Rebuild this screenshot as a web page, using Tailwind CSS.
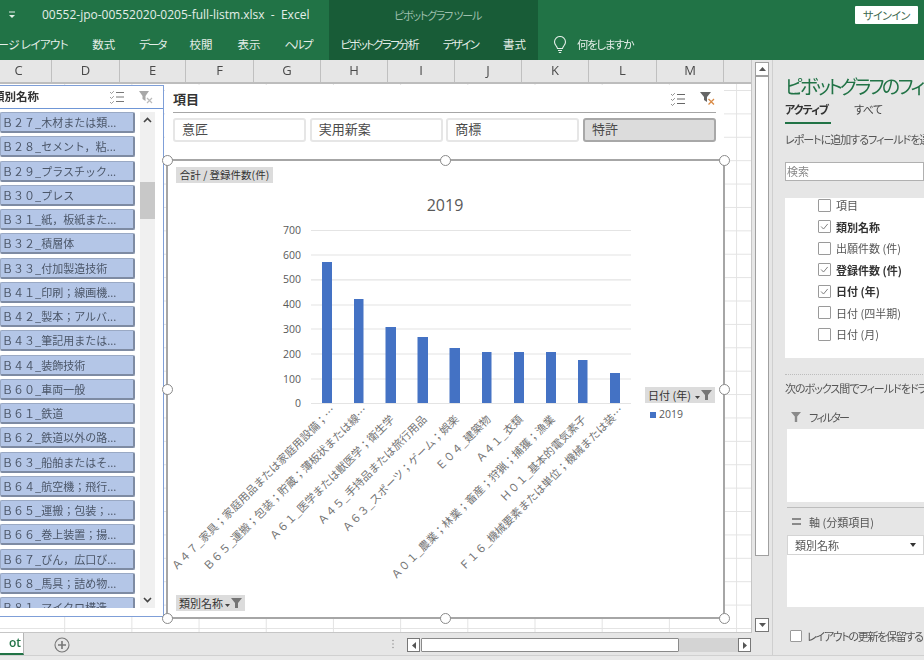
<!DOCTYPE html>
<html lang="ja">
<head>
<meta charset="utf-8">
<script src="https://cdn.jsdelivr.net/npm/@tailwindcss/browser@4"></script>
</head>
<body class="m-0 overflow-hidden bg-[#e6e6e6]">
<div class="w-[924px] h-[660px] flex flex-col overflow-hidden blur-[0.5px] text-[#444] [font-family:'Noto_Sans_CJK_JP',sans-serif] [font-feature-settings:'palt']">

  <!-- title bar -->
  <header class="h-[30px] flex items-center bg-[#217346] text-[#e4eee8] shrink-0">
    <div class="w-[42px] flex justify-center pr-[18px]">
      <svg width="8" height="8" viewBox="0 0 8 8"><path d="M1 1h6" stroke="#e4eee8"/><path d="M1 4h6L4 7z" fill="#e4eee8"/></svg>
    </div>
    <div class="w-[287px] text-[12px] whitespace-pre [font-family:'Open_Sans',sans-serif]">00552-jpo-00552020-0205-full-listm.xlsx  -  Excel</div>
    <div class="w-[209px] h-full bg-[#185c37] flex items-center justify-center pl-[8px] text-[11px] tracking-[-1.2px] text-[#9dbfac]">ピボットグラフ ツール</div>
    <div class="flex-1 flex justify-end pr-[6px]">
      <div class="w-[63px] h-[18px] bg-white rounded-[1px] flex items-center justify-center text-[11px] tracking-[-0.5px] text-[#3f6b52]">サインイン</div>
    </div>
  </header>

  <!-- ribbon tabs -->
  <nav class="h-[30px] flex items-center bg-[#217346] text-[#e4eee8] text-[11.5px] shrink-0 whitespace-nowrap">
    <div class="w-[80px] h-full overflow-hidden flex items-center justify-end pr-[12px]"><span class="shrink-0 tracking-[-0.6px]">ページ レイアウト</span></div>
    <div class="w-[47.5px] text-center">数式</div>
    <div class="w-[49.5px] text-center tracking-[-2px]">データ</div>
    <div class="w-[48px] text-center">校閲</div>
    <div class="w-[48px] text-center">表示</div>
    <div class="w-[56px] text-center pr-[6px] tracking-[-2px]">ヘルプ</div>
    <div class="w-[209px] h-full bg-[#185c37] flex items-center">
      <div class="w-[100px] text-center tracking-[-1.700px]">ピボットグラフ分析</div>
      <div class="w-[63px] text-center tracking-[-1.700px]">デザイン</div>
      <div class="w-[45px] text-center">書式</div>
    </div>
    <div class="flex items-center pl-[15px] gap-[10px]">
      <svg width="14" height="18" viewBox="0 0 14 18" fill="none" stroke="#e4eee8" stroke-width="1.1"><path d="M4.5 12.5C4 10 1.5 9 1.5 6a5.5 5.5 0 0 1 11 0c0 3-2.500 4-3 6.500z"/><path d="M5 14.500h4M5.800 16.500h2.400"/></svg>
      <span class="tracking-[-1.300px]">何をしますか</span>
    </div>
  </nav>

  <!-- main -->
  <main class="flex-1 flex min-h-0">
    <div class="w-[772px] flex flex-col">
      <div class="flex-1 flex min-h-0">
        <div class="w-[752px] flex flex-col border-r border-[#c6c6c6]">
          <!-- column headers -->
          <div class="h-[24px] flex shrink-0 -ml-[14px] border-b-2 border-[#bdbdbd] text-[13px] leading-[20px] text-[#4a4a4a] [font-family:'Open_Sans',sans-serif] bg-[#e6e6e6]">
            <div class="w-[66px] border-r border-[#c0c0c0] text-center">C</div>
            <div class="w-[68px] border-r border-[#c0c0c0] text-center">D</div>
            <div class="w-[66px] border-r border-[#c0c0c0] text-center">E</div>
            <div class="w-[68px] border-r border-[#c0c0c0] text-center">F</div>
            <div class="w-[67px] border-r border-[#c0c0c0] text-center">G</div>
            <div class="w-[67px] border-r border-[#c0c0c0] text-center">H</div>
            <div class="w-[67px] border-r border-[#c0c0c0] text-center">I</div>
            <div class="w-[67px] border-r border-[#c0c0c0] text-center">J</div>
            <div class="w-[67px] border-r border-[#c0c0c0] text-center">K</div>
            <div class="w-[68px] border-r border-[#c0c0c0] text-center">L</div>
            <div class="w-[67px] border-r border-[#c0c0c0] text-center">M</div>
          </div>

          <!-- sheet -->
          <div class="relative flex-1 overflow-hidden bg-white bg-[linear-gradient(#e3e3e3_1px,transparent_1px),linear-gradient(90deg,#e3e3e3_1px,transparent_1px)] bg-[length:67.2px_23.4px] bg-[position:-3px_6px] border-b border-[#c6c6c6]">

            <!-- left slicer -->
            <section class="absolute left-[-10px] top-[1px] w-[174px] h-[532px] bg-white border border-[#7f9fd8] flex flex-col">
              <div class="h-[23px] flex items-center pl-[2px] border-b border-[#6f96d6] shrink-0">
                <span class="w-[116px] text-[11.5px] font-bold text-[#333] overflow-hidden whitespace-nowrap">類別名称</span>
                <svg width="16" height="14" viewBox="0 0 16 14" fill="none" stroke="#777"><path d="M1 2l1.500 1.500L5 1M1 7l1.500 1.500L5 6M1 12l1.500 1.500L5 11" stroke-dasharray="1 .6"/><path d="M7 2.500h8M7 7h8M7 11.500h8"/></svg>
                <svg class="ml-[13px]" width="16" height="15" viewBox="0 0 16 15"><path d="M1 1h10L7.500 6v5L4.500 9V6z" fill="#a8a8a8"/><path d="M9 8l5 5M14 8l-5 5" stroke="#bbb" stroke-width="1.200"/></svg>
              </div>
              <div class="flex-1 flex pt-[3px] pl-[9px] min-h-0 overflow-hidden">
                <ul class="w-[135px] flex flex-col gap-[3.250px] text-[11px] leading-[18px] text-[#4b5668] whitespace-nowrap overflow-hidden h-[496px] [font-feature-settings:normal]">
                  <li class="h-[21px] shrink-0 bg-[#b4c6e7] border border-[#9aa9c4] border-r-2 border-b-2 border-r-[#7e8ba3] border-b-[#7e8ba3] rounded-[2px] pl-[1px]">Ｂ２７_木材または類...</li>
                  <li class="h-[21px] shrink-0 bg-[#b4c6e7] border border-[#9aa9c4] border-r-2 border-b-2 border-r-[#7e8ba3] border-b-[#7e8ba3] rounded-[2px] pl-[1px]">Ｂ２８_セメント，粘...</li>
                  <li class="h-[21px] shrink-0 bg-[#b4c6e7] border border-[#9aa9c4] border-r-2 border-b-2 border-r-[#7e8ba3] border-b-[#7e8ba3] rounded-[2px] pl-[1px]">Ｂ２９_プラスチック...</li>
                  <li class="h-[21px] shrink-0 bg-[#b4c6e7] border border-[#9aa9c4] border-r-2 border-b-2 border-r-[#7e8ba3] border-b-[#7e8ba3] rounded-[2px] pl-[1px]">Ｂ３０_プレス</li>
                  <li class="h-[21px] shrink-0 bg-[#b4c6e7] border border-[#9aa9c4] border-r-2 border-b-2 border-r-[#7e8ba3] border-b-[#7e8ba3] rounded-[2px] pl-[1px]">Ｂ３１_紙，板紙また...</li>
                  <li class="h-[21px] shrink-0 bg-[#b4c6e7] border border-[#9aa9c4] border-r-2 border-b-2 border-r-[#7e8ba3] border-b-[#7e8ba3] rounded-[2px] pl-[1px]">Ｂ３２_積層体</li>
                  <li class="h-[21px] shrink-0 bg-[#b4c6e7] border border-[#9aa9c4] border-r-2 border-b-2 border-r-[#7e8ba3] border-b-[#7e8ba3] rounded-[2px] pl-[1px]">Ｂ３３_付加製造技術</li>
                  <li class="h-[21px] shrink-0 bg-[#b4c6e7] border border-[#9aa9c4] border-r-2 border-b-2 border-r-[#7e8ba3] border-b-[#7e8ba3] rounded-[2px] pl-[1px]">Ｂ４１_印刷；線画機...</li>
                  <li class="h-[21px] shrink-0 bg-[#b4c6e7] border border-[#9aa9c4] border-r-2 border-b-2 border-r-[#7e8ba3] border-b-[#7e8ba3] rounded-[2px] pl-[1px]">Ｂ４２_製本；アルバ...</li>
                  <li class="h-[21px] shrink-0 bg-[#b4c6e7] border border-[#9aa9c4] border-r-2 border-b-2 border-r-[#7e8ba3] border-b-[#7e8ba3] rounded-[2px] pl-[1px]">Ｂ４３_筆記用または...</li>
                  <li class="h-[21px] shrink-0 bg-[#b4c6e7] border border-[#9aa9c4] border-r-2 border-b-2 border-r-[#7e8ba3] border-b-[#7e8ba3] rounded-[2px] pl-[1px]">Ｂ４４_装飾技術</li>
                  <li class="h-[21px] shrink-0 bg-[#b4c6e7] border border-[#9aa9c4] border-r-2 border-b-2 border-r-[#7e8ba3] border-b-[#7e8ba3] rounded-[2px] pl-[1px]">Ｂ６０_車両一般</li>
                  <li class="h-[21px] shrink-0 bg-[#b4c6e7] border border-[#9aa9c4] border-r-2 border-b-2 border-r-[#7e8ba3] border-b-[#7e8ba3] rounded-[2px] pl-[1px]">Ｂ６１_鉄道</li>
                  <li class="h-[21px] shrink-0 bg-[#b4c6e7] border border-[#9aa9c4] border-r-2 border-b-2 border-r-[#7e8ba3] border-b-[#7e8ba3] rounded-[2px] pl-[1px]">Ｂ６２_鉄道以外の路...</li>
                  <li class="h-[21px] shrink-0 bg-[#b4c6e7] border border-[#9aa9c4] border-r-2 border-b-2 border-r-[#7e8ba3] border-b-[#7e8ba3] rounded-[2px] pl-[1px]">Ｂ６３_船舶またはそ...</li>
                  <li class="h-[21px] shrink-0 bg-[#b4c6e7] border border-[#9aa9c4] border-r-2 border-b-2 border-r-[#7e8ba3] border-b-[#7e8ba3] rounded-[2px] pl-[1px]">Ｂ６４_航空機；飛行...</li>
                  <li class="h-[21px] shrink-0 bg-[#b4c6e7] border border-[#9aa9c4] border-r-2 border-b-2 border-r-[#7e8ba3] border-b-[#7e8ba3] rounded-[2px] pl-[1px]">Ｂ６５_運搬；包装；...</li>
                  <li class="h-[21px] shrink-0 bg-[#b4c6e7] border border-[#9aa9c4] border-r-2 border-b-2 border-r-[#7e8ba3] border-b-[#7e8ba3] rounded-[2px] pl-[1px]">Ｂ６６_巻上装置；揚...</li>
                  <li class="h-[21px] shrink-0 bg-[#b4c6e7] border border-[#9aa9c4] border-r-2 border-b-2 border-r-[#7e8ba3] border-b-[#7e8ba3] rounded-[2px] pl-[1px]">Ｂ６７_びん，広口び...</li>
                  <li class="h-[21px] shrink-0 bg-[#b4c6e7] border border-[#9aa9c4] border-r-2 border-b-2 border-r-[#7e8ba3] border-b-[#7e8ba3] rounded-[2px] pl-[1px]">Ｂ６８_馬具；詰め物...</li>
                  <li class="h-[21px] shrink-0 bg-[#b4c6e7] border border-[#9aa9c4] border-r-2 border-b-2 border-r-[#7e8ba3] border-b-[#7e8ba3] rounded-[2px] pl-[1px]">Ｂ８１_マイクロ構造...</li>
                </ul>
                <div class="ml-[5px] w-[15px] h-[496px] bg-[#f0f0f0] flex flex-col justify-between items-center relative">
                  <svg class="mt-[5px]" width="9" height="6" viewBox="0 0 9 6" fill="none" stroke="#444" stroke-width="1.600"><path d="M1 5l3.500-3.500L8 5"/></svg>
                  <div class="absolute left-0 top-[70px] w-[15px] h-[37px] bg-[#c8c8c8]"></div>
                  <svg class="mb-[5px]" width="9" height="6" viewBox="0 0 9 6" fill="none" stroke="#444" stroke-width="1.600"><path d="M1 1l3.500 3.500L8 1"/></svg>
                </div>
              </div>
            </section>

            <!-- top slicer -->
            <section class="absolute left-[165px] top-[1px] w-[559px] h-[75px] bg-white px-[8px]">
              <div class="h-[28px] flex items-center border-b border-[#a6a6a6]">
                <span class="flex-1 text-[13px] font-bold text-[#333]">項目</span>
                <svg width="16" height="14" viewBox="0 0 16 14" fill="none" stroke="#666"><path d="M1 2l1.500 1.500L5 1M1 7l1.500 1.500L5 6M1 12l1.500 1.500L5 11" stroke-dasharray="1 .6"/><path d="M7 2.500h8M7 7h8M7 11.500h8"/></svg>
                <svg class="ml-[13px]" width="17" height="15" viewBox="0 0 17 15"><path d="M1 1h11L8 6v5L5 9V6z" fill="#666"/><path d="M9.500 8l5.500 5.500M15 8l-5.500 5.500" stroke="#d98a45" stroke-width="1.300"/></svg>
              </div>
              <div class="grid grid-cols-4 gap-[3.500px] mt-[5px] text-[13px] leading-[17px] text-[#4a4a4a]">
                <div class="h-[24px] bg-white border-2 border-[#e6e6e6] rounded-[3px] pl-[7px]">意匠</div>
                <div class="h-[24px] bg-white border-2 border-[#e6e6e6] rounded-[3px] pl-[7px]">実用新案</div>
                <div class="h-[24px] bg-white border-2 border-[#e6e6e6] rounded-[3px] pl-[7px]">商標</div>
                <div class="h-[24px] bg-[#dcdcdc] border-2 border-[#a8a8a8] rounded-[3px] pl-[7px]">特許</div>
              </div>
            </section>

            <!-- chart -->
            <section class="absolute left-[166px] top-[75px] w-[559px] h-[460px] bg-white border-2 border-[#a6a6a6] text-[10.5px] text-[#333]">
              <svg class="block [font-feature-settings:normal]" width="555" height="456" viewBox="168 161 555 456" font-family="'Noto Sans CJK JP',sans-serif">
                <text x="445" y="211" text-anchor="middle" font-size="16" fill="#595959" font-family="'Open Sans',sans-serif">2019</text>
                <g stroke="#e4e4e4" stroke-width="1.200">
                  <path d="M311 230.500H631M311 255H631M311 279.800H631M311 305H631M311 329H631M311 354H631M311 379H631M311 403.500H631"/>
                </g>
                <g font-size="10.500" fill="#595959" text-anchor="end" font-family="'Open Sans',sans-serif">
                  <text x="301" y="233.500">700</text><text x="301" y="258.500">600</text><text x="301" y="283">500</text><text x="301" y="308">400</text><text x="301" y="332.500">300</text><text x="301" y="357.500">200</text><text x="301" y="382.500">100</text><text x="301" y="407">0</text>
                </g>
                <g fill="#4472c4">
                  <rect x="322" y="262" width="10" height="141"/>
                  <rect x="354" y="299" width="9.500" height="104"/>
                  <rect x="385.500" y="327" width="10.500" height="76"/>
                  <rect x="417.500" y="337" width="10.500" height="66"/>
                  <rect x="449.500" y="348" width="10.500" height="55"/>
                  <rect x="482" y="352" width="9.500" height="51"/>
                  <rect x="514" y="352" width="10" height="51"/>
                  <rect x="546" y="352" width="10" height="51"/>
                  <rect x="578" y="360" width="9.500" height="43"/>
                  <rect x="610" y="373" width="10" height="30"/>
                </g>
                <g font-size="11" fill="#737373" text-anchor="end">
                  <text transform="translate(336 411) rotate(-45)">Ａ４７_家具；家庭用品または家庭用設備；…</text>
                  <text transform="translate(368 411) rotate(-45)">Ｂ６５_運搬；包装；貯蔵；薄板状または線…</text>
                  <text transform="translate(395 420) rotate(-45)">Ａ６１_医学または獣医学；衛生学</text>
                  <text transform="translate(427.500 420) rotate(-45)">Ａ４５_手持品または旅行用品</text>
                  <text transform="translate(459.500 420) rotate(-45)">Ａ６３_スポーツ；ゲーム；娯楽</text>
                  <text transform="translate(491.500 420) rotate(-45)">Ｅ０４_建築物</text>
                  <text transform="translate(523.500 420) rotate(-45)">Ａ４１_衣類</text>
                  <text transform="translate(555.500 420) rotate(-45)">Ａ０１_農業；林業；畜産；狩猟；捕獲；漁業</text>
                  <text transform="translate(587 420) rotate(-45)">Ｈ０１_基本的電気素子</text>
                  <text transform="translate(624 411) rotate(-45)">Ｆ１６_機械要素または単位；機械または装…</text>
                </g>
                <rect x="650" y="412" width="6" height="6" fill="#4472c4"/>
                <text x="659" y="418" font-size="10.500" fill="#595959" font-family="'Open Sans',sans-serif">2019</text>
              </svg>
              <div class="absolute left-[8px] top-[6px] w-[97px] h-[16px] bg-[#dcdcdc] flex items-center justify-center text-[10.500px] whitespace-nowrap">合計 / 登録件数(件)</div>
              <div class="absolute left-[477px] top-[226px] w-[70px] h-[16px] bg-[#dcdcdc] flex items-center pl-[3px] text-[11px] whitespace-nowrap">日付 (年)
                <svg class="ml-auto mr-[2px]" width="18" height="10" viewBox="0 0 18 10" fill="#757575"><path d="M0 6h5L2.500 9z" fill="#444"/><path d="M6 0h11l-4 5v5h-3V5z"/></svg>
              </div>
              <div class="absolute left-[8px] top-[434px] w-[69px] h-[16px] bg-[#dcdcdc] flex items-center pl-[3px] text-[11px] whitespace-nowrap">類別名称
                <svg class="ml-auto mr-[2px]" width="18" height="10" viewBox="0 0 18 10" fill="#757575"><path d="M0 6h5L2.500 9z" fill="#444"/><path d="M6 0h11l-4 5v5h-3V5z"/></svg>
              </div>
            </section>

            <!-- selection handles -->
            <span class="absolute left-[162px] top-[71px] size-[11px] rounded-full bg-white border-[1.500px] border-[#8a8a8a]"></span>
            <span class="absolute left-[440px] top-[71px] size-[11px] rounded-full bg-white border-[1.500px] border-[#8a8a8a]"></span>
            <span class="absolute left-[719px] top-[71px] size-[11px] rounded-full bg-white border-[1.500px] border-[#8a8a8a]"></span>
            <span class="absolute left-[162px] top-[300px] size-[11px] rounded-full bg-white border-[1.500px] border-[#8a8a8a]"></span>
            <span class="absolute left-[719px] top-[300px] size-[11px] rounded-full bg-white border-[1.500px] border-[#8a8a8a]"></span>
            <span class="absolute left-[162px] top-[529px] size-[11px] rounded-full bg-white border-[1.500px] border-[#8a8a8a]"></span>
            <span class="absolute left-[440px] top-[529px] size-[11px] rounded-full bg-white border-[1.500px] border-[#8a8a8a]"></span>
            <span class="absolute left-[719px] top-[529px] size-[11px] rounded-full bg-white border-[1.500px] border-[#8a8a8a]"></span>
          </div>
        </div>

        <!-- vertical scrollbar -->
        <div class="w-[20px] flex flex-col items-center pt-[2px] pb-[1px]">
          <div class="w-[14px] h-[14px] bg-white border border-[#a0a0a0] flex items-center justify-center shrink-0">
            <svg width="7" height="4" viewBox="0 0 7 4" fill="#555"><path d="M0 4l3.500-4L7 4z"/></svg>
          </div>
          <div class="w-[14px] h-[480px] bg-white border border-[#a0a0a0] shrink-0"></div>
          <div class="flex-1"></div>
          <div class="w-[14px] h-[14px] bg-white border border-[#777] flex items-center justify-center shrink-0">
            <svg width="7" height="4" viewBox="0 0 7 4" fill="#555"><path d="M0 0l3.500 4L7 0z"/></svg>
          </div>
        </div>
      </div>

      <!-- sheet tabs -->
      <div class="h-[22px] flex items-start shrink-0 bg-[#e6e6e6] relative">
        <div class="w-[24px] h-[22px] bg-white border-r border-[#b5b5b5] border-b-2 border-b-[#217346] overflow-hidden flex justify-end pr-[2px] text-[12px] font-semibold text-[#217346] [font-family:'Open_Sans',sans-serif] leading-[20px]">ot</div>
        <svg class="ml-[30px] mt-[4px]" width="16" height="16" viewBox="0 0 16 16" fill="none" stroke="#777" stroke-width="1.100"><circle cx="8" cy="8" r="7"/><path d="M8 4v8M4 8h8" stroke-width="1.600"/></svg>
        <svg class="ml-[321px] mt-[6px]" width="4" height="10" viewBox="0 0 4 10" fill="#9a9a9a"><circle cx="2" cy="1.500" r=".8"/><circle cx="2" cy="5" r=".8"/><circle cx="2" cy="8.500" r=".8"/></svg>
        <div class="ml-[12px] mt-[5px] w-[344px] h-[14px] flex">
          <div class="w-[13px] h-[14px] bg-white border border-[#777] flex items-center justify-center"><svg width="4" height="7" viewBox="0 0 4 7" fill="#555"><path d="M4 0L0 3.500 4 7z"/></svg></div>
          <div class="w-[258px] ml-[1px] h-[14px] bg-white border border-[#8a8a8a] rounded-[1px]"></div>
          <div class="flex-1 bg-[#d4d4d4]"></div>
          <div class="w-[13px] h-[14px] bg-white border border-[#777] flex items-center justify-center"><svg width="4" height="7" viewBox="0 0 4 7" fill="#555"><path d="M0 0l4 3.500L0 7z"/></svg></div>
        </div>
      </div>
    </div>

    <!-- field panel -->
    <aside class="flex-1 border-l border-[#cfcfcf] pl-[12px] overflow-hidden whitespace-nowrap">
      <h2 class="text-[19px] leading-[26px] mt-[13px] text-[#217346] font-normal tracking-[-2.600px] w-[300px]">ピボットグラフのフィールド</h2>
      <div class="flex text-[11px] leading-[18px] mt-[1px] h-[15px]">
        <span class="w-[69px] font-bold text-[#333] tracking-[-1px]">アクティブ</span><span class="tracking-[-0.5px]">すべて</span>
      </div>
      <div class="w-[46px] h-[2px] mt-[7px] bg-[#217346]"></div>
      <p class="text-[11px] leading-[16px] mt-[7px] text-[#555] tracking-[-1px] w-[300px]">レポートに追加するフィールドを選択:</p>
      <div class="h-[19px] mt-[15px] bg-white border border-[#b0b0b0] pl-[1px] text-[11px] leading-[16px] text-[#888]">検索</div>
      <ul class="h-[160px] mt-[17px] bg-white pl-[33px] text-[11px] text-[#555]">
        <li class="h-[14px] flex items-center gap-[5px]"><span class="size-[13px] border border-[#9a9a9a] rounded-[1px]"></span>項目</li>
        <li class="h-[21.500px] mt-[4px] flex items-center gap-[5px] font-bold text-[#333]"><svg class="size-[13px] border border-[#9a9a9a] rounded-[1px]" viewBox="0 0 13 13" fill="none" stroke="#777" stroke-width="1.100"><path d="M2.500 6.500l2.800 3 5-6"/></svg>類別名称</li>
        <li class="h-[21.500px] flex items-center gap-[5px]"><span class="size-[13px] border border-[#9a9a9a] rounded-[1px]"></span>出願件数 (件)</li>
        <li class="h-[21.500px] flex items-center gap-[5px] font-bold text-[#333]"><svg class="size-[13px] border border-[#9a9a9a] rounded-[1px]" viewBox="0 0 13 13" fill="none" stroke="#777" stroke-width="1.100"><path d="M2.500 6.500l2.800 3 5-6"/></svg>登録件数 (件)</li>
        <li class="h-[21.500px] flex items-center gap-[5px] font-bold text-[#333]"><svg class="size-[13px] border border-[#9a9a9a] rounded-[1px]" viewBox="0 0 13 13" fill="none" stroke="#777" stroke-width="1.100"><path d="M2.500 6.500l2.800 3 5-6"/></svg>日付 (年)</li>
        <li class="h-[21.500px] flex items-center gap-[5px]"><span class="size-[13px] border border-[#9a9a9a] rounded-[1px]"></span>日付 (四半期)</li>
        <li class="h-[21.500px] flex items-center gap-[5px]"><span class="size-[13px] border border-[#9a9a9a] rounded-[1px]"></span>日付 (月)</li>
      </ul>
      <div class="mt-[16px] border-t border-dotted border-[#bdbdbd] w-[200px]"></div>
      <p class="text-[11px] leading-[16px] mt-[5px] text-[#555] tracking-[-1px] w-[300px]">次のボックス間でフィールドをドラッグしてください:</p>
      <div class="flex items-center h-[16px] mt-[13px] ml-[6px] gap-[8px] text-[11px] text-[#555] tracking-[-1.800px]">
        <svg width="10" height="10" viewBox="0 0 10 10" fill="#8a8a8a"><path d="M0 0h10L6.200 4.500V10H3.800V4.500z"/></svg>フィルター
      </div>
      <div class="h-[73px] mt-[4px] ml-[2px] bg-white"></div>
      <div class="h-px mt-[5px] ml-[2px] bg-[#bdbdbd]"></div>
      <div class="flex items-center h-[16px] mt-[6px] ml-[7px] gap-[8px] text-[11px] text-[#555]">
        <svg width="9" height="8" viewBox="0 0 9 8" fill="#8a8a8a"><path d="M0 0h9v2H0zM0 5h9v2H0z"/></svg>軸 (分類項目)
      </div>
      <div class="h-[72px] mt-[5px] ml-[2px] bg-white">
        <div class="h-[20px] flex items-center justify-between border border-[#d4d4d4] px-[7px] text-[11px] text-[#555]">類別名称
          <svg class="shrink-0" width="6" height="4" viewBox="0 0 6 4" fill="#333"><path d="M0 0h6L3 4z"/></svg>
        </div>
      </div>
      <div class="flex items-center h-[16px] mt-[21px] ml-[5px] gap-[5px] text-[11px] text-[#555] tracking-[-1.300px] w-[300px]">
        <span class="size-[12px] border border-[#9a9a9a] bg-white rounded-[1px]"></span>レイアウトの更新を保留する
      </div>
    </aside>
  </main>

  <div class="h-[5px] bg-[#e9e9e9] border-t border-[#d0d0d0] shrink-0"></div>
</div>
</body>
</html>
